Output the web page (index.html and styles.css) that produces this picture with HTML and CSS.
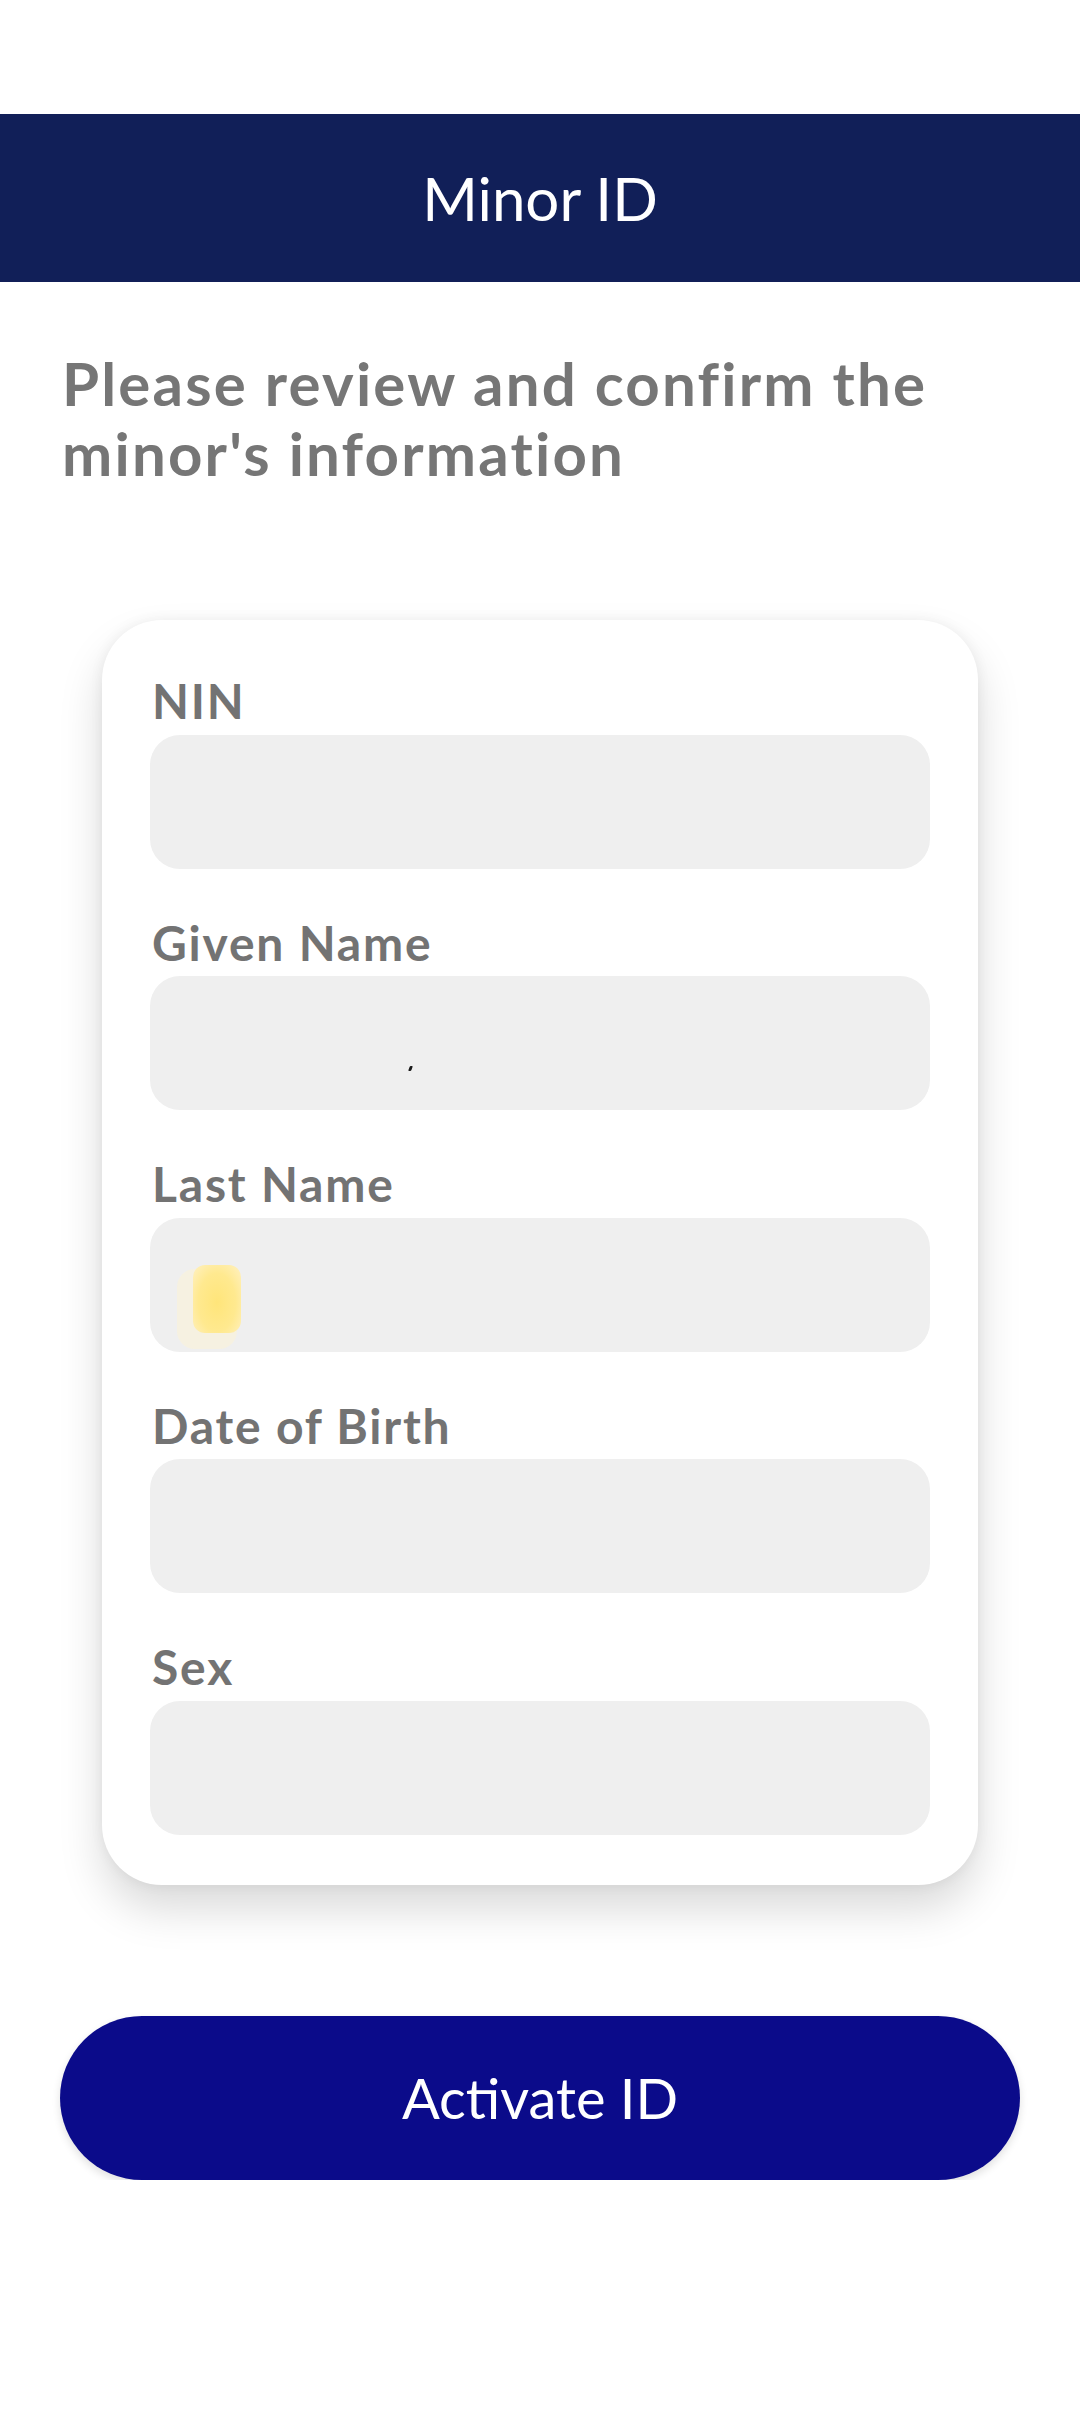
FILE: index.html
```html
<!DOCTYPE html>
<html lang="en">
<head>
<meta charset="utf-8">
<meta name="viewport" content="width=1080">
<title>Minor ID</title>
<link rel="stylesheet" href="styles.css">
</head>
<body>
<div class="status-space"></div>
<header class="appbar">
  <h1 class="appbar-title">Minor ID</h1>
</header>
<main class="content">
  <h2 class="prompt">Please review and confirm the<br>minor's information</h2>
  <section class="card">
    <div class="field-group">
      <label class="field-label">NIN</label>
      <div class="field"></div>
    </div>
    <div class="field-group">
      <label class="field-label">Given Name</label>
      <div class="field"><span class="speck"></span></div>
    </div>
    <div class="field-group">
      <label class="field-label">Last Name</label>
      <div class="field"><span class="glow"></span></div>
    </div>
    <div class="field-group">
      <label class="field-label">Date of Birth</label>
      <div class="field"></div>
    </div>
    <div class="field-group">
      <label class="field-label">Sex</label>
      <div class="field"></div>
    </div>
  </section>
  <button class="primary-btn" type="button">Activate ID</button>
</main>
</body>
</html>
```

FILE: styles.css
```css
* { box-sizing: border-box; }

html, body {
  margin: 0;
  padding: 0;
  background: #ffffff;
}

body {
  width: 1080px;
  font-family: Lato, "Open Sans", "Liberation Sans", sans-serif;
}

.status-space {
  height: 114px;
}

.appbar {
  height: 168px;
  background: #111f58;
  display: flex;
  align-items: center;
  justify-content: center;
}

.appbar-title {
  margin: 0;
  font-size: 60px;
  font-weight: 400;
  line-height: 60px;
  color: #ffffff;
}

.content {
  display: flex;
  flex-direction: column;
}

.prompt {
  margin: 66px 0 0;
  padding: 0 62px;
  font-size: 60px;
  font-weight: 700;
  line-height: 70px;
  letter-spacing: 2.2px;
  font-variant-ligatures: none;
  color: #767676;
  white-space: nowrap;
}

.card {
  margin: 132px 102px 0;
  padding: 52px 48px 50px;
  background: #ffffff;
  border-radius: 60px;
  box-shadow: 0 24px 44px rgba(0, 0, 0, 0.15), 0 0 14px rgba(0, 0, 0, 0.06);
  display: flex;
  flex-direction: column;
  gap: 45px;
}

.field-group {
  display: flex;
  flex-direction: column;
  gap: 5px;
}

.field-label {
  padding-left: 2px;
  font-size: 48px;
  font-weight: 700;
  line-height: 57.6px;
  letter-spacing: 1.8px;
  color: #737373;
}

.field {
  height: 134px;
  background: #efefef;
  border-radius: 30px;
  display: flex;
  align-items: flex-start;
}

.speck {
  width: 3px;
  height: 5px;
  margin: 90px 0 0 259px;
  background: #1a1a1a;
  border-radius: 1px;
  transform: skewX(-20deg);
}

.glow {
  width: 48px;
  height: 68px;
  margin: 47px 0 0 43px;
  border-radius: 12px;
  background: radial-gradient(ellipse at 50% 55%, #ffe57a 0%, #ffe98f 55%, #fff1c4 100%);
  box-shadow: -10px 10px 0 6px #f6f1e1;
}

.primary-btn {
  margin: 131px 60px 0;
  height: 164px;
  border: none;
  border-radius: 82px;
  background: #0b0b8a;
  color: #ffffff;
  font-family: Lato, "Open Sans", "Liberation Sans", sans-serif;
  font-size: 56px;
  font-weight: 400;
  box-shadow: 0 4px 8px rgba(0, 0, 0, 0.12);
  padding: 0;
}
```
